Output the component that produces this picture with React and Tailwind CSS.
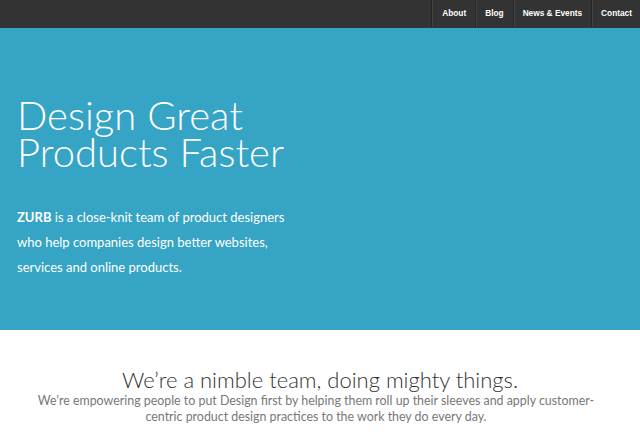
export default function App() {
  const nav = [
    ["About", "pl-[10px] pr-[9px]"],
    ["Blog", "px-[9px]"],
    ["News & Events", "px-[9px]"],
    ["Contact", "pl-[9px] pr-[8px]"],
  ];
  return (
    <div className="w-[640px] h-[440px] overflow-hidden bg-white" style={{ fontFamily: "Lato, 'Liberation Sans', sans-serif" }}>
      <div className="h-[28px] bg-[#333333] flex justify-end border-b border-[#2a3a3e]">
        {nav.map(([n, p]) => (
          <div key={n} className="flex items-center border-l border-l-[#252525] shadow-[inset_1px_0_0_#444]">
            <span className={p + " text-[8.3px] font-bold text-white"} style={{ fontFamily: "'Liberation Sans', sans-serif" }}>{n}</span>
          </div>
        ))}
      </div>
      <div className="h-[302px] bg-[#35a4c5] px-[17px] pt-[69px] text-white">
        <h1 className="text-[40px] leading-[37px] font-light">Design Great<br />Products Faster</h1>
        <p className="mt-[34px] text-[13px] leading-[25px] w-[290px]">
          <b className="font-bold">ZURB</b> is a close-knit team of product designers who help companies design better websites, services and online products.
        </p>
      </div>
      <div className="pt-[37px] text-center">
        <h2 className="text-[22px] leading-[26px] font-light text-[#333]">We’re a nimble team, doing mighty things.</h2>
        <p className="mx-auto pr-[8px] text-[12.4px] leading-[16px] text-[#777]">We’re empowering people to put Design first by helping them roll up their sleeves and apply customer-<br />centric product design practices to the work they do every day.</p>
      </div>
    </div>
  );
}
